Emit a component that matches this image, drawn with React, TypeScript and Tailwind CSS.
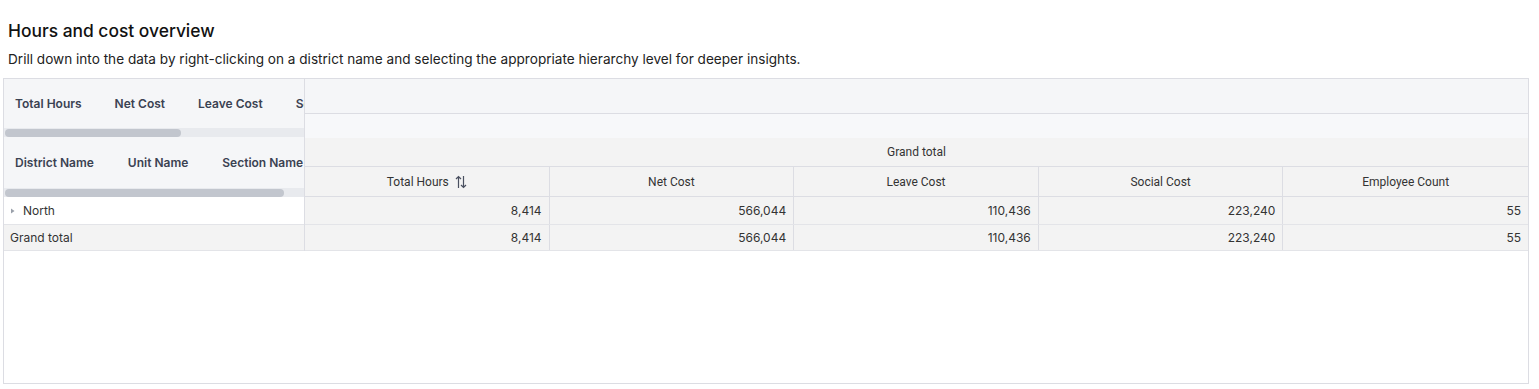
import React from "react";

const cols = ["Total Hours", "Net Cost", "Leave Cost", "Social Cost", "Employee Count"];
const vals = ["8,414", "566,044", "110,436", "223,240", "55"];

function SortIcon() {
  return (
    <svg width="12" height="14" viewBox="0 0 12 14" className="ml-[6px] inline-block" fill="none" stroke="#4a5060" strokeWidth="1.2">
      <path d="M3.5 13V1.5M1 4l2.5-2.5L6 4" />
      <path d="M8.5 1v11.5M6 10l2.5 2.5L11 10" />
    </svg>
  );
}

export default function App() {
  return (
    <div className="w-[1539px] h-[389px] bg-white text-[#222]" style={{ fontFamily: "Inter, 'Liberation Sans', sans-serif" }}>
      <div className="pl-[8px] pt-[19px] text-[17.4px] leading-[24px] font-medium text-[#111]">Hours and cost overview</div>
      <div className="pl-[8px] mt-[6px] text-[13.6px] leading-[20px] text-[#222]">
        Drill down into the data by right-clicking on a district name and selecting the appropriate hierarchy level for deeper insights.
      </div>
      <div className="ml-[3px] mt-[9px] w-[1526px] h-[306px] border border-[#dcdde3] flex flex-col text-[12px]">
        <div className="flex">
          <div className="w-[301px] shrink-0 border-r border-[#dcdde3] flex flex-col">
            <div className="h-[49px] bg-[#f5f6f8] flex items-center gap-[33px] pl-[11px] overflow-hidden whitespace-nowrap font-semibold text-[#3b4252]">
              <span>Total Hours</span>
              <span>Net Cost</span>
              <span>Leave Cost</span>
              <span>Social Cost</span>
            </div>
            <div className="h-[9px] bg-[#e8eaee] flex items-center">
              <div className="ml-[1px] w-[176px] h-[8px] rounded-full bg-[#c2c6ce]" />
            </div>
            <div className="h-[51px] bg-[#f5f6f8] flex items-center gap-[34px] pl-[11px] overflow-hidden whitespace-nowrap font-semibold text-[#3b4252]">
              <span>District Name</span>
              <span>Unit Name</span>
              <span>Section Name</span>
            </div>
            <div className="h-[9px] bg-[#e8eaee] flex items-center">
              <div className="ml-[1px] w-[279px] h-[8px] rounded-full bg-[#c2c6ce]" />
            </div>
            <div className="h-[28px] bg-white border-b border-[#e3e4e8] flex items-center pl-[6px] text-[#333]">
              <svg width="6" height="8" viewBox="0 0 6 8" className="mr-[7px]">
                <path d="M1 1.5L4.5 4L1 6.5Z" fill="#9aa0aa" />
              </svg>
              <span>North</span>
            </div>
            <div className="h-[26px] bg-[#f3f3f3] border-b border-[#e3e4e8] flex items-center pl-[6px] text-[#333]">
              Grand total
            </div>
          </div>
          <div className="flex-1 flex flex-col">
            <div className="h-[35px] bg-[#f5f6f8] border-b border-[#dcdde3]" />
            <div className="h-[24px] bg-[#f7f8fa]" />
            <div className="h-[29px] bg-[#f3f3f3] border-b border-[#dcdde3] flex items-center justify-center text-[#333]" style={{ fontFamily: "Roboto, 'Liberation Sans', sans-serif" }}>
              Grand total
            </div>
            <div className="h-[30px] bg-[#f3f3f3] border-b border-[#dcdde3] grid grid-cols-5 text-[#333]" style={{ fontFamily: "Roboto, 'Liberation Sans', sans-serif" }}>
              {cols.map((c, i) => (
                <div key={c} className={`flex items-center justify-center ${i < 4 ? "border-r border-[#dcdde3]" : ""}`}>
                  <span>{c}</span>
                  {i === 0 && <SortIcon />}
                </div>
              ))}
            </div>
            <div className="h-[28px] bg-[#f3f3f3] border-b border-[#e3e4e8] grid grid-cols-5 text-[#333]">
              {vals.map((v, i) => (
                <div key={i} className={`flex items-center justify-end pr-[7px] ${i < 4 ? "border-r border-[#dcdde3]" : ""}`}>{v}</div>
              ))}
            </div>
            <div className="h-[26px] bg-[#f3f3f3] border-b border-[#e3e4e8] grid grid-cols-5 text-[#333]">
              {vals.map((v, i) => (
                <div key={i} className={`flex items-center justify-end pr-[7px] ${i < 4 ? "border-r border-[#dcdde3]" : ""}`}>{v}</div>
              ))}
            </div>
          </div>
        </div>
        <div className="flex-1" />
      </div>
    </div>
  );
}
